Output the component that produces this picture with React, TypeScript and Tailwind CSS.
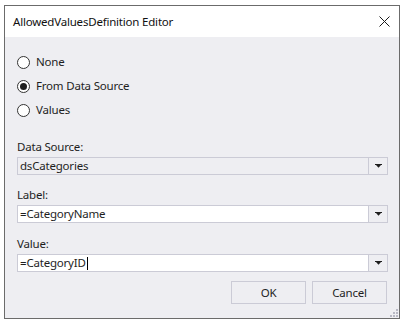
import React from "react";

const font = { fontFamily: '"Noto Sans", "Segoe UI", Arial, sans-serif' };

function Radio({ checked, label }: { checked?: boolean; label: string }) {
  return (
    <div className="flex h-[24px] items-center">
      <div className="flex h-[13px] w-[13px] items-center justify-center rounded-full border border-[#333333] bg-white">
        {checked && <div className="h-[7px] w-[7px] rounded-full bg-[#1f1f1f]" />}
      </div>
      <span className="ml-[6px] text-[11.5px] leading-[16px] tracking-[-0.2px] text-[#1e1e1e]">{label}</span>
    </div>
  );
}

function Arrow() {
  return (
    <svg width="7" height="4" viewBox="0 0 7 4">
      <rect x="0" y="0" width="7" height="1" fill="#1e1e1e" />
      <polygon points="1,1 6,1 3.5,3.8" fill="#1e1e1e" />
    </svg>
  );
}

function Field({
  label,
  value,
  disabled,
  caret,
  gap,
}: {
  label: string;
  value: string;
  disabled?: boolean;
  caret?: boolean;
  gap: string;
}) {
  return (
    <div className={gap}>
      <div className="h-[16px] text-[11.5px] leading-[16px] tracking-[-0.2px] text-[#1e1e1e]">{label}</div>
      <div
        className={`mt-[2px] flex h-[18px] w-[371px] border border-[#cbcbd6] ${
          disabled ? "bg-[#eeeef2]" : "bg-white"
        }`}
      >
        <div className="flex flex-1 items-center pl-[2px] text-[11.5px] leading-[16px] tracking-[-0.2px] text-[#1e1e1e]">
          {value}
          {caret && <span className="ml-[1px] inline-block h-[13px] w-[1px] bg-black" />}
        </div>
        <div className="flex w-[19px] items-center justify-center border-l border-[#cbcbd6] bg-[#eeeef2]">
          <Arrow />
        </div>
      </div>
    </div>
  );
}

export default function App() {
  return (
    <div className="h-[324px] w-[404px] bg-white pl-[4px] pt-[5px]" style={font}>
      <div className="flex h-[314px] w-[396px] flex-col border border-[#6b6b6b] bg-[#eeeef2]">
        <div className="flex h-[31px] items-center justify-between bg-white pl-[8px] pr-[9px]">
          <span className="text-[11.5px] leading-[16px] tracking-[-0.2px] text-[#111111]">
            AllowedValuesDefinition Editor
          </span>
          <svg width="11" height="11" viewBox="0 0 11 11">
            <path d="M0.5 0.5 L10.5 10.5 M10.5 0.5 L0.5 10.5" stroke="#1a1a1a" strokeWidth="1" />
          </svg>
        </div>
        <div className="relative flex flex-1 flex-col pl-[12px] pt-[13px]">
          <Radio label="None" />
          <Radio checked label="From Data Source" />
          <Radio label="Values" />
          <Field gap="mt-[17px]" label="Data Source:" value="dsCategories" disabled />
          <Field gap="mt-[12px]" label="Label:" value="=CategoryName" />
          <Field gap="mt-[13px]" label="Value:" value="=CategoryID" caret />
          <div className="mt-[9px] flex w-[370px] justify-end gap-[6px]">
            <div className="flex h-[23px] w-[75px] items-center justify-center border border-[#cbcbd6] text-[11.5px] tracking-[-0.2px] text-[#1e1e1e]">
              OK
            </div>
            <div className="flex h-[23px] w-[75px] items-center justify-center border border-[#cbcbd6] text-[11.5px] tracking-[-0.2px] text-[#1e1e1e]">
              Cancel
            </div>
          </div>
          <svg className="absolute bottom-[1px] right-[1px]" width="8" height="8" viewBox="0 0 8 8">
            <rect x="6" y="0" width="2" height="2" fill="#b8b8c4" />
            <rect x="3" y="3" width="2" height="2" fill="#b8b8c4" />
            <rect x="6" y="3" width="2" height="2" fill="#b8b8c4" />
            <rect x="0" y="6" width="2" height="2" fill="#b8b8c4" />
            <rect x="3" y="6" width="2" height="2" fill="#b8b8c4" />
            <rect x="6" y="6" width="2" height="2" fill="#b8b8c4" />
          </svg>
        </div>
      </div>
    </div>
  );
}
